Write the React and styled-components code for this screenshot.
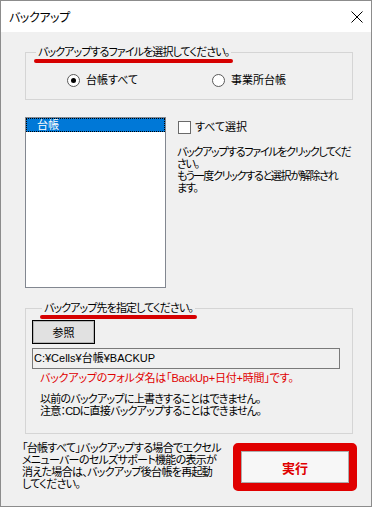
import React from 'react'
import styled, { createGlobalStyle } from 'styled-components'

const GlobalStyle = createGlobalStyle`
  body {
    margin: 0;
    background: #ffffff;
    font-family: "Liberation Sans", "Noto Sans CJK JP", sans-serif;
    font-size: 11px;
    letter-spacing: -0.9px;
    font-feature-settings: "palt";
    color: #000;
  }
`

const Window = styled.div`
  width: 372px;
  height: 507px;
  box-sizing: border-box;
  border: 1px solid #8c8c8c;
  display: flex;
  flex-direction: column;
  background: #f0f0f0;
`

const TitleBar = styled.div`
  height: 31px;
  flex: none;
  background: #ffffff;
  display: flex;
  align-items: center;
  justify-content: space-between;
  padding: 0 8px 0 8px;
  font-size: 12px;
  letter-spacing: -0.4px;
`

const Client = styled.div`
  flex: 1;
  padding: 13px 0 0 24px;
  display: flex;
  flex-direction: column;
`

const Group = styled.fieldset`
  margin: 0;
  padding: 0;
  width: 328px;
  box-sizing: border-box;
  border: 1px solid #d5d5d5;
  min-width: 0;
`

const Legend = styled.legend`
  position: relative;
  margin-left: 10px;
  padding: 0 2px;
  line-height: 14px;
  white-space: nowrap;

  &::after {
    content: '';
    position: absolute;
    left: -2px;
    right: -2px;
    top: 14px;
    height: 4px;
    border-radius: 2px;
    background: #d60000;
  }
`

const RadioRow = styled.div`
  display: grid;
  grid-template-columns: 145px auto;
  padding: 14px 0 12px 41px;
  line-height: 14px;
`

const Choice = styled.label`
  display: flex;
  align-items: center;
  gap: 6px;
  letter-spacing: 0;
`

const RadioDot = styled.span`
  width: 11px;
  height: 11px;
  border: 1px solid #5a5a5a;
  border-radius: 50%;
  background: #fff;
  display: flex;
  align-items: center;
  justify-content: center;

  &::after {
    content: '';
    width: 5px;
    height: 5px;
    border-radius: 50%;
    background: ${p => (p.$on ? '#000' : 'transparent')};
  }
`

const Middle = styled.div`
  display: flex;
  gap: 11px;
  margin-top: 17px;
`

const ListBox = styled.div`
  flex: none;
  width: 141px;
  height: 171px;
  box-sizing: border-box;
  border: 1px solid #828790;
  background: #fff;
`

const ListItem = styled.div`
  height: 14px;
  line-height: 12px;
  box-sizing: border-box;
  border: 1px dotted #000;
  background: ${p => (p.$selected ? '#0078d7' : 'transparent')};
  color: ${p => (p.$selected ? '#fff' : '#000')};
  padding-left: 10px;
  letter-spacing: 0;
`

const Side = styled.div`
  padding-top: 3px;
  display: flex;
  flex-direction: column;
`

const CheckRow = styled.label`
  display: flex;
  align-items: center;
  gap: 4px;
  margin-left: 1px;
  line-height: 14px;
  letter-spacing: 0;
`

const CheckBox = styled.span`
  width: 11px;
  height: 11px;
  border: 1px solid #6a6a6a;
  background: #fff;
`

const Hint = styled.p`
  margin: 12px 0 0;
  line-height: 12px;
  white-space: nowrap;
  letter-spacing: -1.3px;
`

const LowerGroup = styled(Group)`
  margin-top: 13px;
  padding: 0 0 16px 6px;
`

const BrowseButton = styled.button`
  margin-top: 5px;
  width: 63px;
  height: 24px;
  border: 1px solid #000;
  box-shadow: inset 0 0 0 1px #b5b5b5;
  background: #e1e1e1;
  font: inherit;
  letter-spacing: 0;
  padding: 0;
`

const PathBox = styled.div`
  margin-top: 4px;
  width: 308px;
  height: 21px;
  box-sizing: border-box;
  border: 1px solid #7a7a7a;
  line-height: 19px;
  padding-left: 1px;
  letter-spacing: 0;
`

const Notes = styled.div`
  padding-left: 8px;
  margin-top: 2px;
`

const RedNote = styled.p`
  margin: 0;
  color: #e00000;
  line-height: 14px;
  letter-spacing: -0.2px;
`

const Warn = styled.p`
  margin: 8px 0 0;
  line-height: 12px;
  letter-spacing: -0.75px;
`

const Bottom = styled.div`
  display: flex;
  justify-content: space-between;
  align-items: flex-start;
  margin: 8px 14px 0 -3px;
`

const BottomNote = styled.p`
  margin: 0;
  line-height: 12px;
  white-space: nowrap;
  letter-spacing: -0.7px;
`

const RunFrame = styled.div`
  flex: none;
  width: 124px;
  height: 48px;
  box-sizing: border-box;
  border: 8px solid #e00000;
  border-radius: 5px;
  margin-top: 1px;
  display: flex;
`

const RunButton = styled.button`
  flex: 1;
  border: 1px solid #adadad;
  background: #f7f7f7;
  color: #e00000;
  font: inherit;
  font-size: 13px;
  font-weight: bold;
  letter-spacing: 0;
  padding: 0;
`

export default function App() {
  return (
    <>
      <GlobalStyle />
      <Window>
        <TitleBar>
          <span>バックアップ</span>
          <svg width="12" height="12" viewBox="0 0 12 12">
            <path d="M0.5 0.5 L11.5 11.5 M11.5 0.5 L0.5 11.5" stroke="#000" strokeWidth="1" fill="none" />
          </svg>
        </TitleBar>
        <Client>
          <Group>
            <Legend>バックアップするファイルを選択してください。</Legend>
            <RadioRow>
              <Choice><RadioDot $on />台帳すべて</Choice>
              <Choice><RadioDot />事業所台帳</Choice>
            </RadioRow>
          </Group>

          <Middle>
            <ListBox>
              <ListItem $selected>台帳</ListItem>
            </ListBox>
            <Side>
              <CheckRow><CheckBox />すべて選択</CheckRow>
              <Hint>
                バックアップするファイルをクリックしてくだ<br />
                さい。<br />
                もう一度クリックすると選択が解除され<br />
                ます。
              </Hint>
            </Side>
          </Middle>

          <LowerGroup>
            <Legend>バックアップ先を指定してください。</Legend>
            <BrowseButton>参照</BrowseButton>
            <PathBox>C:¥Cells¥台帳¥BACKUP</PathBox>
            <Notes>
              <RedNote>バックアップのフォルダ名は「BackUp+日付+時間」です。</RedNote>
              <Warn>
                以前のバックアップに上書きすることはできません。<br />
                注意：CDに直接バックアップすることはできません。
              </Warn>
            </Notes>
          </LowerGroup>

          <Bottom>
            <BottomNote>
              「台帳すべて」バックアップする場合でエクセル<br />
              メニューバーのセルズサポート機能の表示が<br />
              消えた場合は、バックアップ後台帳を再起動<br />
              してください。
            </BottomNote>
            <RunFrame>
              <RunButton>実行</RunButton>
            </RunFrame>
          </Bottom>
        </Client>
      </Window>
    </>
  )
}
